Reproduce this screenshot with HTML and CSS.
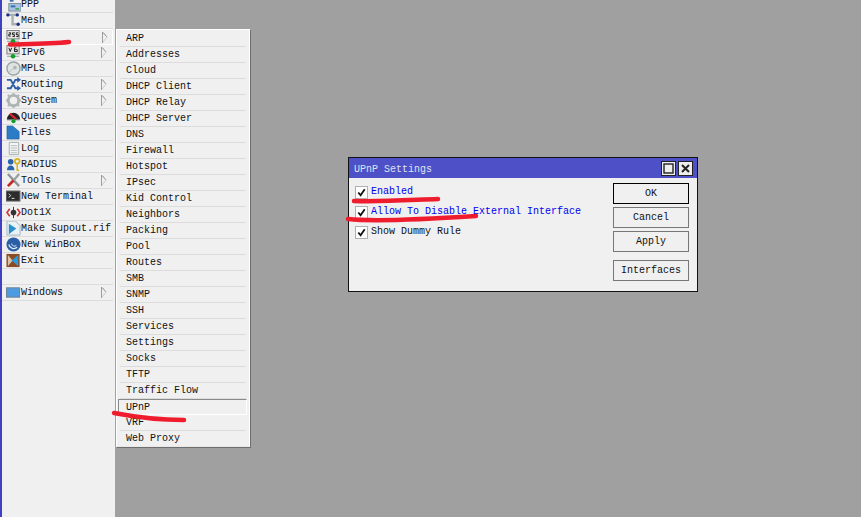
FILE: index.html
```html
<!DOCTYPE html>
<html lang="en">
<head>
<meta charset="utf-8">
<title>UPnP Settings</title>
<link rel="stylesheet" href="styles.css">
</head>
<body>
<svg class="defs" width="0" height="0" aria-hidden="true"><symbol id="more" viewBox="0 0 7 13"><path d="M1 .5l5 5.500-5 6" fill="none" stroke="#c4c4c4"/><path d="M.5 0v13" stroke="#8a8a8a"/><path d="M1 .5l4.500 5" stroke="#8a8a8a"/></symbol></svg>
<div class="desktop">
  <nav class="sidebar">
    <div class="row"><svg class="ico" viewBox="0 0 16 16"><path d="M4 0h4v5H4z" fill="#3f6fa8"/><rect x="3" y="7" width="13" height="8" fill="#a9c4de" stroke="#7b8da0"/><path d="M5 9h5v2H5z" fill="#2f6fb5"/><path d="M10 12h4v1.500h-4z" fill="#2ea043"/></svg><span>PPP</span></div>
    <div class="row"><svg class="ico" viewBox="0 0 16 16"><path d="M2 2h11M7 2v10h6" stroke="#a8b0b5" stroke-width="2.500" fill="none"/><circle cx="2" cy="2" r="1.800" fill="#1d2f80"/><circle cx="12" cy="2" r="1.800" fill="#1d2f80"/><circle cx="13" cy="12" r="1.800" fill="#1d2f80"/></svg><span>Mesh</span></div>
    <div class="row active"><svg class="ico" viewBox="0 0 16 16"><rect x="1" y="0.500" width="13" height="9" fill="#e8e8e8" stroke="#777"/><path d="M3 3h2v1.500H3v2h2M7 3H9.500M7 3v2h2v2H7M11 3h2M11 3v2h2v2h-2" stroke="#111" fill="none"/><path d="M1 12h13" stroke="#999"/><path d="M7.500 10v5" stroke="#0a8a20" stroke-width="2"/><circle cx="7.500" cy="12" r="2.500" fill="#12a02c"/></svg><span>IP</span><svg class="arrow"><use href="#more"/></svg></div>
    <div class="row"><svg class="ico" viewBox="0 0 16 16"><rect x="1" y="0.500" width="13" height="9" fill="#e8e8e8" stroke="#777"/><path d="M3 3l1.500 4L6 3M11 3H9v4h3V5H9" stroke="#111" fill="none"/><path d="M1 12h13" stroke="#999"/><circle cx="7.500" cy="12" r="2.500" fill="#12a02c"/></svg><span>IPv6</span><svg class="arrow"><use href="#more"/></svg></div>
    <div class="row"><svg class="ico wide" viewBox="0 0 16 16"><circle cx="8" cy="8" r="7" fill="#dfe3e3" stroke="#9aa5a5" stroke-width="1.500"/><circle cx="9.500" cy="7" r="2" fill="#aeb6b6"/><path d="M3 12l5-4" stroke="#b5bcbc"/></svg><span>MPLS</span></div>
    <div class="row"><svg class="ico" viewBox="0 0 16 16"><path d="M1 3h4l5 9h3M1 12h4l5-9h3" stroke="#2a5da5" stroke-width="2" fill="none"/><path d="M12 0l4 3-4 3zM12 9l4 3-4 3z" fill="#2a5da5"/></svg><span>Routing</span><svg class="arrow"><use href="#more"/></svg></div>
    <div class="row"><svg class="ico" viewBox="0 0 16 16"><circle cx="8" cy="8" r="5.500" fill="none" stroke="#aeb4b4" stroke-width="3"/><path d="M8 0v3M8 13v3M0 8h3M13 8h3M2 2l2 2M12 12l2 2M14 2l-2 2M4 12l-2 2" stroke="#aeb4b4" stroke-width="2"/></svg><span>System</span><svg class="arrow"><use href="#more"/></svg></div>
    <div class="row"><svg class="ico" viewBox="0 0 16 16"><path d="M1 11a7 7 0 0 1 14 0z" fill="#222"/><path d="M4 5l7 6" stroke="#d9232e" stroke-width="2.500"/><path d="M1 11h14v1H1z" fill="#555"/><circle cx="8" cy="13" r="2.200" fill="#12a02c"/></svg><span>Queues</span></div>
    <div class="row"><svg class="ico" viewBox="0 0 16 16"><path d="M1 1h6l7 6v8H1z" fill="#2b7cc4" stroke="#1e5a96" stroke-width="0.600"/></svg><span>Files</span></div>
    <div class="row"><svg class="ico" viewBox="0 0 16 16"><path d="M3.500 1.500h10v13h-10z" fill="#f4f6f6" stroke="#a5adad"/><path d="M5 5h7M5 7.500h7M5 10h7M5 12.500h7" stroke="#b3baba"/></svg><span>Log</span></div>
    <div class="row"><svg class="ico" viewBox="0 0 16 16"><circle cx="5" cy="5" r="3" fill="#2a66b0"/><path d="M1 14a4 5 0 0 1 8 0z" fill="#2a66b0"/><circle cx="12" cy="4.500" r="2.500" fill="none" stroke="#d8b418" stroke-width="1.800"/><path d="M12 7v7h2" stroke="#d8b418" stroke-width="1.600" fill="none"/></svg><span>RADIUS</span></div>
    <div class="row"><svg class="ico" viewBox="0 0 16 16"><path d="M2 1l12 13" stroke="#8d9496" stroke-width="2.500"/><path d="M14 1L8 8" stroke="#9a9fa0" stroke-width="2.500"/><path d="M8 8l-6 6" stroke="#c22a2a" stroke-width="3"/></svg><span>Tools</span><svg class="arrow"><use href="#more"/></svg></div>
    <div class="row"><svg class="ico" viewBox="0 0 16 16"><rect x="0" y="2" width="15" height="11" fill="#2c2c2c" stroke="#888"/><path d="M3 5l2 2-2 2M6 10h3" stroke="#eee" fill="none"/></svg><span>New Terminal</span></div>
    <div class="row"><svg class="ico" viewBox="0 0 16 16"><path d="M4 4L1 8l3 4M12 4l3 4-3 4" stroke="#c33" stroke-width="1.700" fill="none"/><circle cx="8" cy="8" r="3" fill="#333"/><path d="M8 2v12" stroke="#333"/></svg><span>Dot1X</span></div>
    <div class="row"><svg class="ico" viewBox="0 0 16 16"><path d="M1 0h9l5 5v10H1z" fill="#eaf2f6" stroke="#9db4c2"/><path d="M3 3l8 5-8 6z" fill="#2a8fd0"/></svg><span>Make Supout.rif</span></div>
    <div class="row"><svg class="ico" viewBox="0 0 16 16"><circle cx="8" cy="8" r="7.500" fill="#2a5fa8"/><path d="M3 8a5.500 5.500 0 0 0 9 3" stroke="#dfeaf5" stroke-width="1.300" fill="none"/><path d="M6 7a3 3 0 0 0 5 2" stroke="#dfeaf5" fill="none"/></svg><span>New WinBox</span></div>
    <div class="row"><svg class="ico" viewBox="0 0 16 16"><rect x="0.500" y="1" width="14" height="14" fill="#8a4a22"/><path d="M2 2l5 6-5 6" fill="#d8c2a8"/><path d="M13 2v12L6 8z" fill="#2a9ae0"/></svg><span>Exit</span></div>
    <div class="row"></div>
    <div class="row"><svg class="ico" viewBox="0 0 16 16"><rect x="0.500" y="3" width="14" height="10" fill="#4d9be0" stroke="#6c7f90"/></svg><span>Windows</span><svg class="arrow"><use href="#more"/></svg></div>
  </nav>
  <main class="workspace"></main>

  <ul class="submenu">
    <li>ARP</li><li>Addresses</li><li>Cloud</li><li>DHCP Client</li><li>DHCP Relay</li><li>DHCP Server</li><li>DNS</li><li>Firewall</li><li>Hotspot</li><li>IPsec</li><li>Kid Control</li><li>Neighbors</li><li>Packing</li><li>Pool</li><li>Routes</li><li>SMB</li><li>SNMP</li><li>SSH</li><li>Services</li><li>Settings</li><li>Socks</li><li>TFTP</li><li>Traffic Flow</li><li class="current">UPnP</li><li>VRF</li><li>Web Proxy</li>
  </ul>

  <section class="dialog">
    <header class="titlebar">
      <span class="title">UPnP Settings</span>
      <span class="winbtn"><svg viewBox="0 0 11 11"><rect x="1" y="1" width="9" height="9" fill="none" stroke="#222" stroke-width="1.400"/></svg></span>
      <span class="winbtn"><svg viewBox="0 0 11 11"><path d="M2 2l7 7M9 2l-7 7" stroke="#222" stroke-width="2"/></svg></span>
    </header>
    <div class="dialog-body">
      <div class="options">
        <label class="opt blue"><span class="box"><svg viewBox="0 0 12 12"><path d="M2.500 6l2.500 3 4.500-6.500" fill="none" stroke="#111" stroke-width="2"/></svg></span>Enabled</label>
        <label class="opt blue"><span class="box"><svg viewBox="0 0 12 12"><path d="M2.500 6l2.500 3 4.500-6.500" fill="none" stroke="#111" stroke-width="2"/></svg></span>Allow To Disable External Interface</label>
        <label class="opt"><span class="box"><svg viewBox="0 0 12 12"><path d="M2.500 6l2.500 3 4.500-6.500" fill="none" stroke="#111" stroke-width="2"/></svg></span>Show Dummy Rule</label>
      </div>
      <div class="buttons">
        <button class="btn default">OK</button>
        <button class="btn">Cancel</button>
        <button class="btn">Apply</button>
        <button class="btn spaced">Interfaces</button>
      </div>
    </div>
  </section>

  <svg class="marks" viewBox="0 0 861 517">
    <path d="M10 44.500C28 44 50 44 69 42" />
    <path d="M354 201C380 202 410 200 438 199" />
    <path d="M348 219C375 222 430 219 476 216" />
    <path d="M114 413C135 417 160 420 184 420" />
  </svg>
</div>
</body>
</html>
```
FILE: styles.css
```css
* { box-sizing: border-box; }
html, body { margin: 0; padding: 0; height: 100%; }
body { font: 10px/16px "Liberation Mono", monospace; color: #111; overflow: hidden; }
.defs { display: block; }
.desktop { position: relative; width: 861px; height: 517px; display: flex; overflow: hidden; background: #a0a0a0; }
.sidebar { width: 115px; height: 517px; background: #f0f0f0; border-left: 2px solid #4040c0; padding-right: 2px; flex: none; overflow: hidden; }
.row { position: relative; height: 16px; display: flex; align-items: center; padding-left: 3px; border-bottom: 1px solid #dcdcdc; }
.row:first-child { height: 13px; align-items: flex-end; }
.row:first-child span { position: relative; top: 1px; }
.row.active { background: #f0f0f0; border: 1px solid #fff; padding-left: 2px; }
.row span { white-space: pre; }
.ico { width: 15px; height: 15px; margin-left: 1px; flex: none; }
.arrow { position: absolute; left: 99px; top: 2px; width: 6px; height: 11px; }
.workspace { flex: 1; }
.submenu { position: absolute; left: 116px; top: 29px; width: 134px; height: 418px; margin: 0; padding: 1px 3px 0 3px; list-style: none; background: #f0f0f0; border-top: 1px solid #fff; border-left: 1px solid #fff; border-right: 1px solid #fff; border-bottom: 1px solid #e8e8e8; box-shadow: 1px 1px 0 #6e6e6e; }
.submenu li { height: 16px; padding-left: 6px; border-bottom: 1px solid #dcdcdc; line-height: 15px; }
.submenu li:last-child { border-bottom: 0; }
.submenu li.current { border: 1px solid #8a8a8a; border-bottom-color: #fff; border-right-color: #fff; margin-left: -2px; padding-left: 7px; margin-right: -1px; }
.dialog { position: absolute; left: 348px; top: 157px; width: 350px; height: 135px; background: #f0f0f0; border: 1px solid #111; display: flex; flex-direction: column; padding: 0 0 1px; }
.titlebar { height: 20px; background: #4e50c8; display: flex; align-items: center; gap: 2px; padding: 0 4px 0 5px; flex: none; }
.title { flex: 1; color: #dfe3ee; position: relative; top: 2px; }
.winbtn { width: 15px; height: 15px; background: #eee; border: 1px solid #222; display: flex; align-items: center; justify-content: center; }
.winbtn svg { width: 11px; height: 11px; display: block; }
.dialog-body { flex: 1; display: flex; justify-content: space-between; padding: 5px 8px 0 6px; background: #f0f0f0; }
.options { display: flex; flex-direction: column; gap: 4px; padding-top: 1px; }
.opt { display: flex; align-items: center; gap: 3px; height: 16px; white-space: pre; }
.opt.blue { color: #0000f0; }
.box { width: 13px; height: 13px; background: #fff; border: 1px solid #b0b0b0; display: flex; align-items: center; justify-content: center; flex: none; }
.box svg { width: 11px; height: 11px; display: block; }
.buttons { width: 76px; display: flex; flex-direction: column; gap: 3px; }
.btn { height: 21px; padding: 0; background: #f0f0f0; border: 1px solid #777; font: inherit; color: #111; }
.btn.default { border-color: #000; }
.btn.spaced { margin-top: 5px; }
.marks { position: absolute; left: 0; top: 0; width: 861px; height: 517px; pointer-events: none; }
.marks path { fill: none; stroke: #ee1c2c; stroke-width: 4.500; stroke-linecap: round; }
```
